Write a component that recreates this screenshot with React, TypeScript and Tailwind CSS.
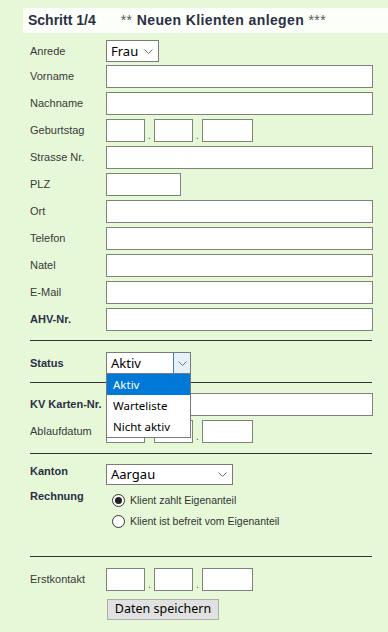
import { ReactNode } from 'react';

const labelFont = "font-['Liberation_Sans',Arial,sans-serif]";
const uiFont = "font-['Noto_Sans','Open_Sans',sans-serif]";

function Chevron() {
  return (
    <svg width="9" height="5" viewBox="0 0 9 5" className="shrink-0">
      <polyline points="0.5,0.5 4.5,4.5 8.5,0.5" fill="none" stroke="#707070" strokeWidth="1" />
    </svg>
  );
}

function Box({ w }: { w: string }) {
  return <div className={`${w} h-full bg-white border border-[#7d8577]`} />;
}

function DateBoxes({ hideFirstDot }: { hideFirstDot?: boolean }) {
  return (
    <div className="flex items-end h-full">
      <Box w="w-[39px]" />
      <span className="w-[9px] text-center text-[10px] leading-[12px] text-[#555]">{hideFirstDot ? '' : '.'}</span>
      <Box w="w-[39px]" />
      <span className="w-[9px] text-center text-[10px] leading-[12px] text-[#555]">.</span>
      <Box w="w-[51px]" />
    </div>
  );
}

function Row({ label, bold, children, cls }: { label: string; bold?: boolean; children: ReactNode; cls: string }) {
  return (
    <div className={`flex items-center ${cls}`}>
      <div
        className={`w-[76px] shrink-0 text-[11px] ${
          bold ? 'font-bold text-[#2b2f45]' : 'text-[#3a3a3a]'
        }`}
      >
        {label}
      </div>
      <div className="h-full flex items-stretch">{children}</div>
    </div>
  );
}

function Select({ value, w, open }: { value: string; w: string; open?: boolean }) {
  return (
    <div
      className={`${w} h-full bg-white border border-[#7a7a7a] flex items-center justify-between ${uiFont} text-[13px] text-black`}
    >
      <span className="pl-[4px] leading-none">{value}</span>
      {open ? (
        <span className="h-full w-[17px] flex items-center justify-center bg-[#e5f1fb] border-l border-[#3c7fb1]">
          <Chevron />
        </span>
      ) : (
        <span className="pr-[5px] flex items-center">
          <Chevron />
        </span>
      )}
    </div>
  );
}

function Radio({ checked, label }: { checked?: boolean; label: string }) {
  return (
    <div className="h-[21px] flex items-center pl-[6px]">
      <span className="w-[13px] h-[13px] rounded-full border border-[#333] bg-white flex items-center justify-center">
        {checked && <span className="w-[7px] h-[7px] rounded-full bg-[#222]" />}
      </span>
      <span className="ml-[5px] text-[10.5px] text-[#333]">{label}</span>
    </div>
  );
}

const Line = ({ cls }: { cls: string }) => <div className={`h-px w-[342px] bg-[#333] ${cls}`} />;

export default function App() {
  const textRows = ['Telefon', 'Natel', 'E-Mail'];
  return (
    <div className={`min-h-[632px] w-[388px] bg-[#e6f8d8] ${labelFont} overflow-hidden`}>
      <div className="ml-[23px] mt-[8px] h-[25px] bg-[#fbfef9] flex items-center pl-[5px] text-[14px] font-bold text-[#2b2f45]">
        <span>Schritt 1/4</span>
        <span className="ml-[25px] tracking-[0.4px]">
          <span className="font-normal text-[#555]">**</span> Neuen Klienten anlegen{' '}
          <span className="font-normal text-[#555]">***</span>
        </span>
      </div>

      <div className="ml-[30px] flex flex-col">
        <Row label="Anrede" cls="h-[22px] mt-[7px]">
          <Select value="Frau" w="w-[53px]" />
        </Row>
        <Row label="Vorname" cls="h-[23px] mt-[3px]">
          <Box w="w-[267px]" />
        </Row>
        <Row label="Nachname" cls="h-[23px] mt-[4px]">
          <Box w="w-[267px]" />
        </Row>
        <Row label="Geburtstag" cls="h-[23px] mt-[4px]">
          <DateBoxes />
        </Row>
        <Row label="Strasse Nr." cls="h-[23px] mt-[4px]">
          <Box w="w-[267px]" />
        </Row>
        <Row label="PLZ" cls="h-[23px] mt-[4px]">
          <Box w="w-[75px]" />
        </Row>
        <Row label="Ort" cls="h-[23px] mt-[4px]">
          <Box w="w-[267px]" />
        </Row>
        {textRows.map((l) => (
          <Row key={l} label={l} cls="h-[23px] mt-[4px]">
            <Box w="w-[267px]" />
          </Row>
        ))}
        <Row label="AHV-Nr." bold cls="h-[23px] mt-[4px]">
          <Box w="w-[267px]" />
        </Row>

        <Line cls="mt-[9px]" />

        <div className="relative">
          <Row label="Status" bold cls="h-[22px] mt-[11px]">
            <Select value="Aktiv" w="w-[85px]" open />
          </Row>
          <div className={`absolute left-[76px] top-[32px] w-[85px] bg-white border border-[#7a7a7a] z-10 ${uiFont} text-[11.5px] text-black`}>
            <div className="h-[21px] flex items-center pl-[6px] bg-[#0078d7] text-white">Aktiv</div>
            <div className="h-[21px] flex items-center pl-[6px]">Warteliste</div>
            <div className="h-[21px] flex items-center pl-[6px]">Nicht aktiv</div>
          </div>
        </div>

        <Line cls="mt-[8px]" />

        <Row label="KV Karten-Nr." bold cls="h-[23px] mt-[10px]">
          <Box w="w-[267px]" />
        </Row>
        <Row label="Ablaufdatum" cls="h-[23px] mt-[4px]">
          <DateBoxes hideFirstDot />
        </Row>

        <Line cls="mt-[10px]" />

        <div className="flex mt-[10px] h-[21px]">
          <div className="w-[76px] text-[11px] font-bold text-[#2b2f45] leading-[14px]">Kanton</div>
          <Select value="Aargau" w="w-[127px]" />
        </div>
        <div className="flex mt-[5px]">
          <div className="w-[76px] text-[11px] font-bold text-[#2b2f45] leading-[12px]">Rechnung</div>
          <div className="flex flex-col">
            <Radio checked label="Klient zahlt Eigenanteil" />
            <Radio label="Klient ist befreit vom Eigenanteil" />
          </div>
        </div>

        <Line cls="mt-[24px]" />

        <Row label="Erstkontakt" cls="h-[23px] mt-[11px]">
          <DateBoxes />
        </Row>
        <div className="ml-[77px] mt-[5px]">
          <button
            className={`h-[21px] w-[112px] bg-[#e1e1e1] border border-[#adadad] ${uiFont} text-[12.5px] text-black leading-none`}
          >
            Daten speichern
          </button>
        </div>
      </div>
    </div>
  );
}
